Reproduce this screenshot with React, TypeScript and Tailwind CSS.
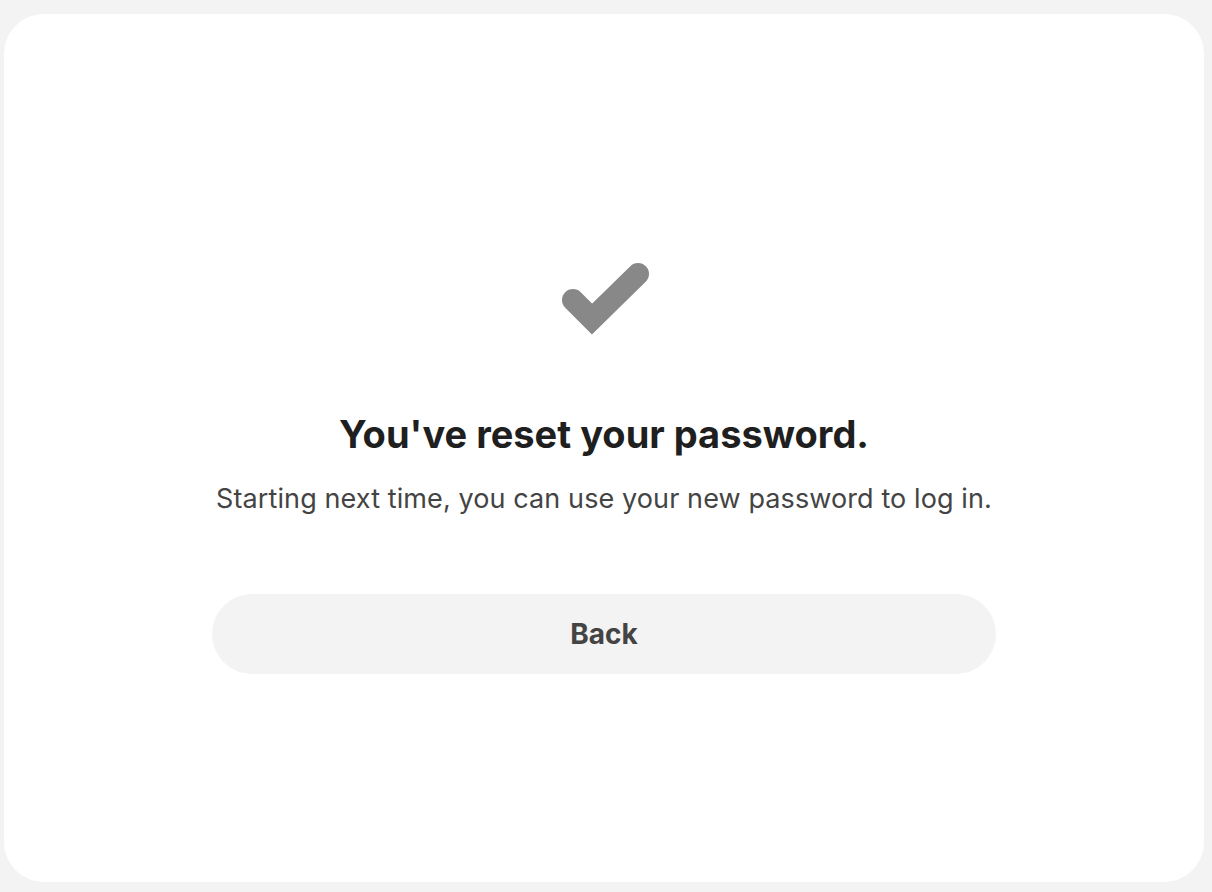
import React from "react";

export default function App() {
  return (
    <div className="w-[1212px] h-[892px] bg-[#f3f3f3] pt-[14px] pl-[4px] pb-[10px]" style={{ fontFamily: "Inter, 'Noto Sans', sans-serif" }}>
      <div className="w-[1200px] h-[868px] bg-white rounded-[40px] flex flex-col items-center pt-[237px]">
        <svg width="100" height="100" viewBox="0 0 100 100" className="block">
          <polyline points="19,49 38,68 84,23" fill="none" stroke="#888888" strokeWidth="22" strokeLinecap="round" strokeLinejoin="miter" />
        </svg>
        <h1 className="mt-[60px] text-[38px] leading-[46px] font-bold text-[#1f1f1f]">You've reset your password.</h1>
        <p className="mt-[25px] text-[27px] leading-[34px] tracking-[0.1px] text-[#444444]">Starting next time, you can use your new password to log in.</p>
        <button className="mt-[78px] w-[784px] h-[80px] rounded-full bg-[#f3f3f3] text-[28px] font-bold text-[#444444]">Back</button>
      </div>
    </div>
  );
}
